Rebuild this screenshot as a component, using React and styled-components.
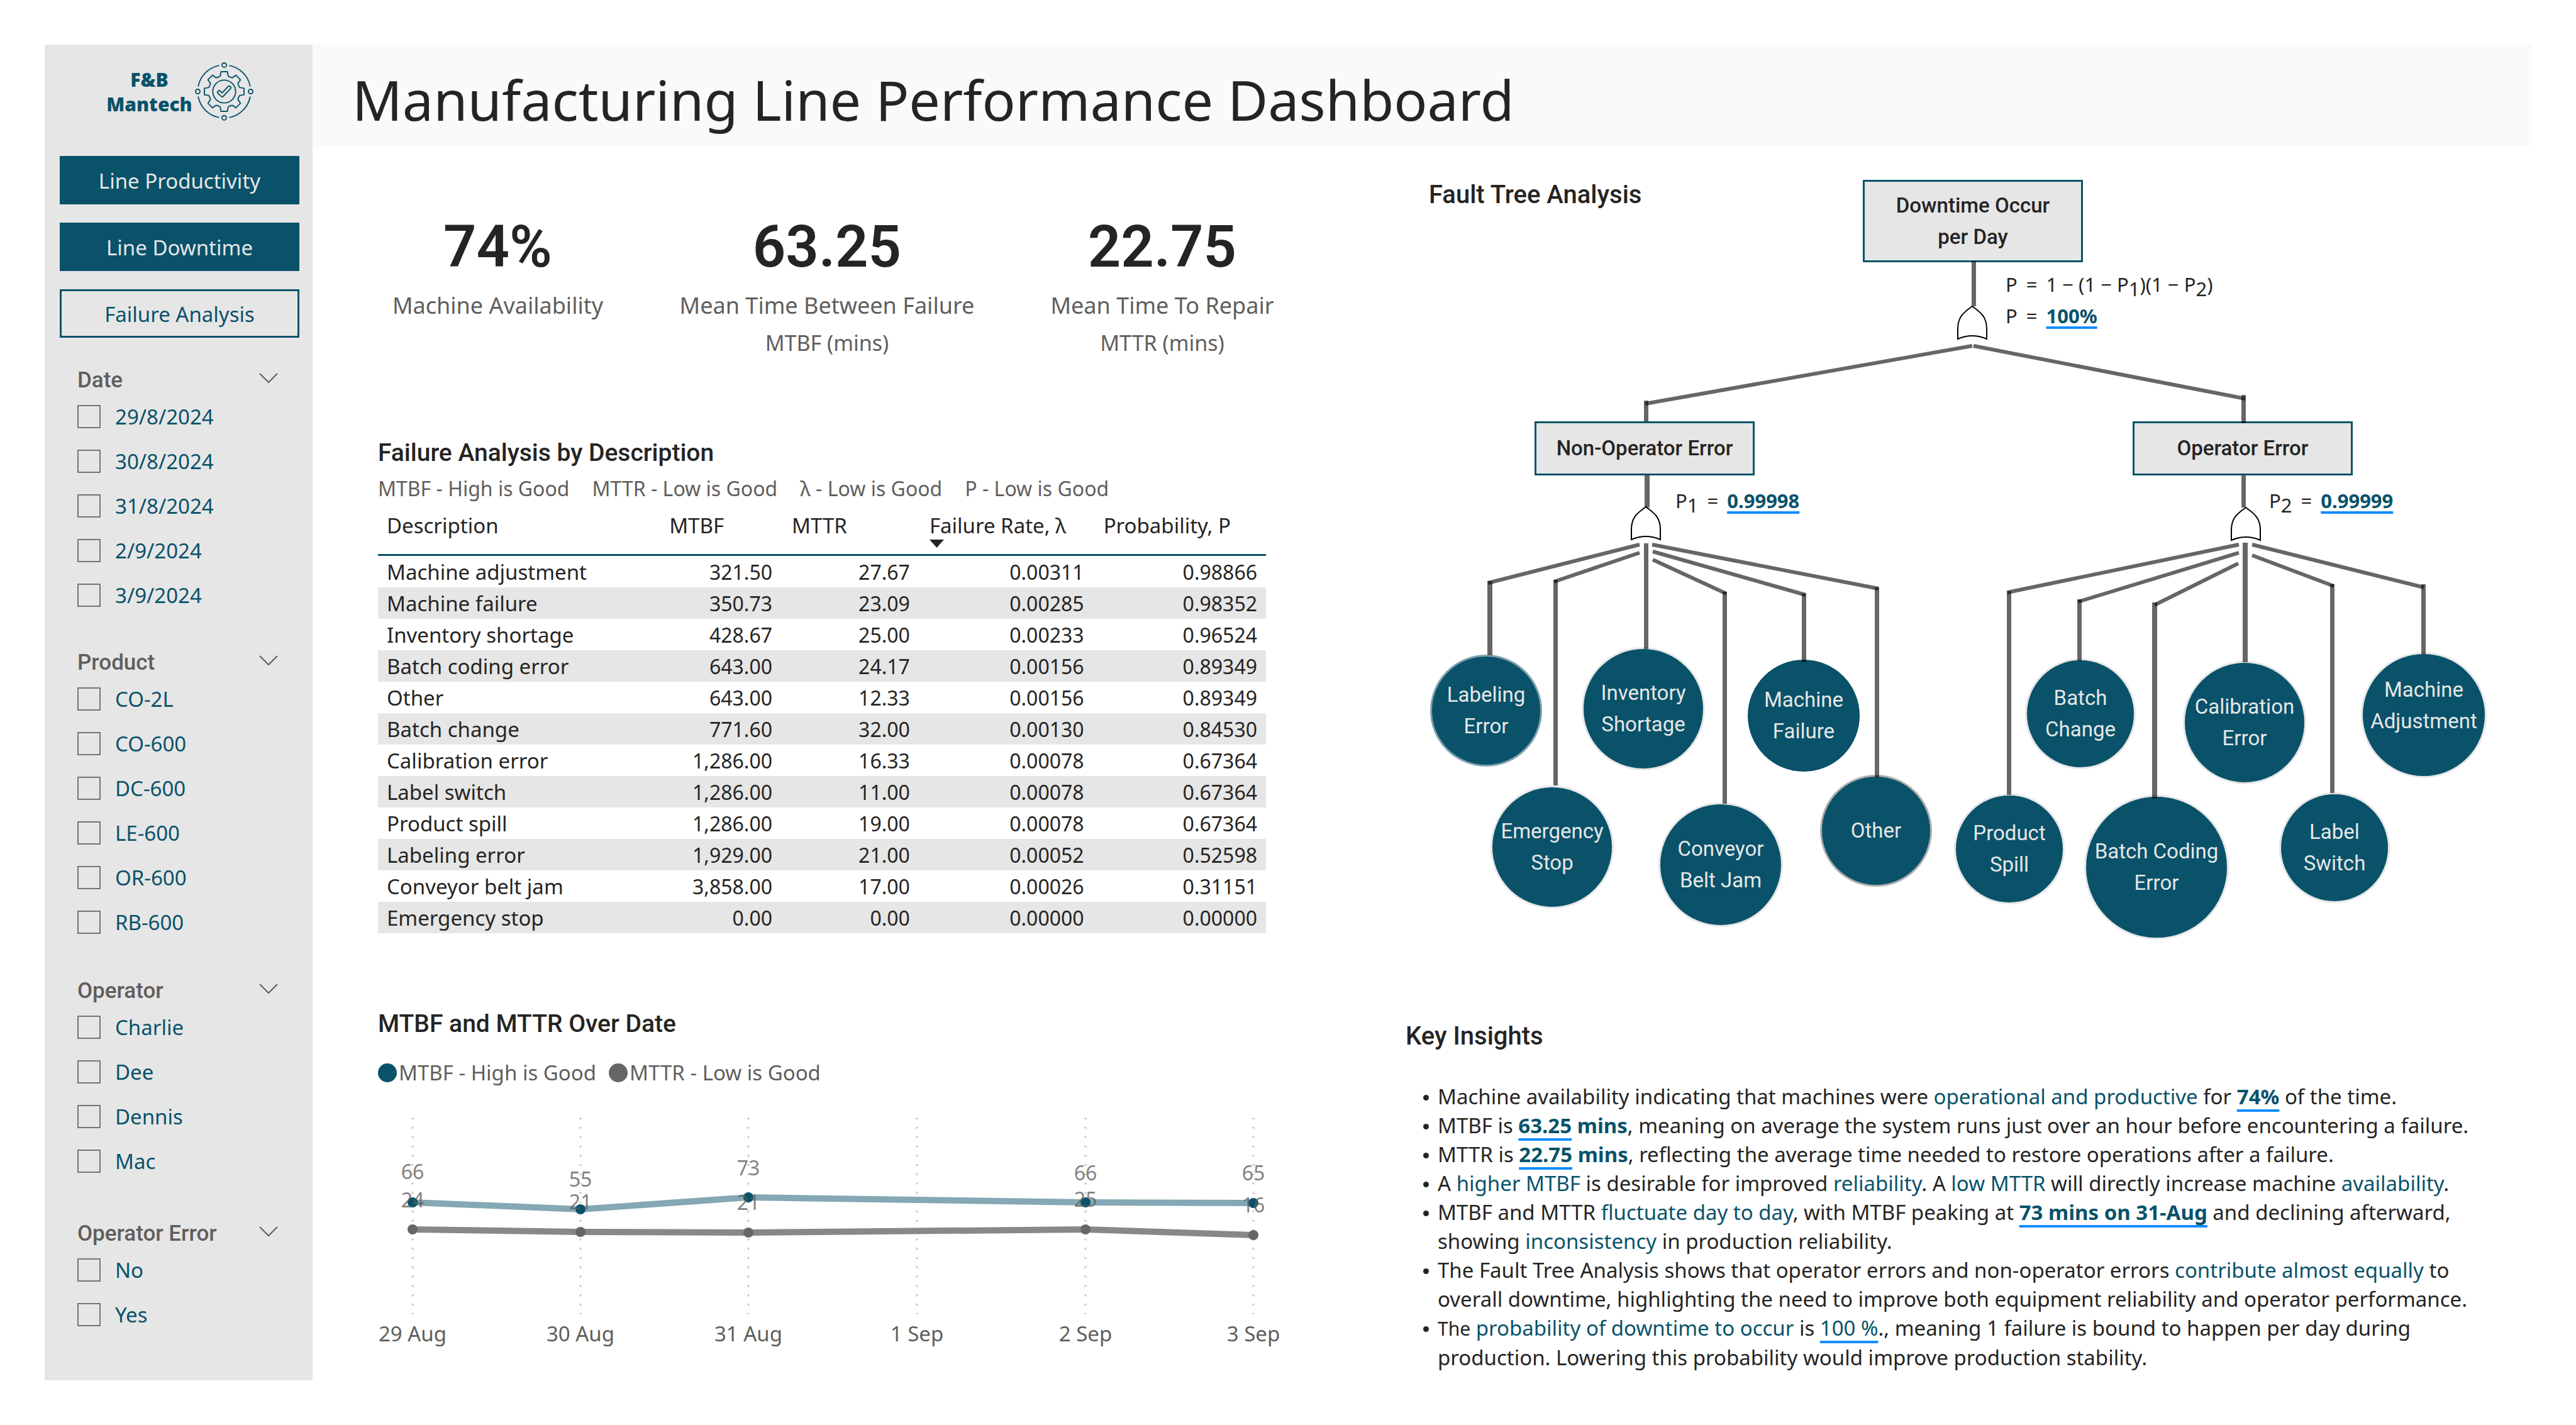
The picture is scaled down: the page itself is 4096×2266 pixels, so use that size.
import React from "react";
import styled, { createGlobalStyle } from "styled-components";

const teal = "#09526a";
const ink = "#252423";
const muted = "#605e5c";
const panel = "#e6e6e6";
const accent = "#118dff";
const textFont = '"Noto Sans", "Open Sans", sans-serif';
const dinFont = 'Roboto, "Noto Sans", sans-serif';

const GlobalStyle = createGlobalStyle`
  *, *::before, *::after { box-sizing: border-box; }
  body { margin: 0; background: #fff; color: ${ink}; font-family: ${textFont}; }
  h1, h2, h3, p, ul { margin: 0; padding: 0; }
`;

const Page = styled.div`
  min-height: 100vh;
  padding: 71px;
  display: grid;
  grid-template-columns: 426px minmax(0, 1fr);
`;

/* ---------- sidebar ---------- */

const Sidebar = styled.aside`
  background: ${panel};
  padding: 28px 0 40px;
`;

const Brand = styled.div`
  display: flex;
  align-items: center;
  justify-content: center;
  gap: 4px;
  margin-bottom: 56px;
  padding-left: 4px;
`;

const BrandName = styled.p`
  color: ${teal};
  font-size: 30px;
  font-weight: 900;
  line-height: 39px;
  text-align: center;
`;

const BrandMark = styled.svg`
  width: 93px;
  height: 93px;
  fill: none;
  stroke: ${teal};
  stroke-width: 6;
`;

const Nav = styled.nav`
  display: flex;
  flex-direction: column;
  gap: 29px;
  padding: 0 21px 0 24px;
  margin-bottom: 46px;
`;

const NavButton = styled.button`
  height: 77px;
  border: 3px solid ${teal};
  background: ${(p) => (p.$active ? panel : teal)};
  color: ${(p) => (p.$active ? teal : panel)};
  font-family: ${textFont};
  font-size: 33px;
  line-height: 46px;
  padding: 2px 0 0;
  cursor: pointer;
`;

const SlicerBox = styled.section`
  padding: 0 55px 0 52px;
  margin-bottom: ${(p) => p.$gap}px;
`;

const SlicerHead = styled.div`
  display: flex;
  align-items: center;
  justify-content: space-between;
  height: 44px;
`;

const SlicerTitle = styled.h3`
  color: ${muted};
  font-family: ${dinFont};
  font-size: 35px;
  font-weight: 500;
  line-height: 44px;
`;

const ChevronButton = styled.button`
  display: flex;
  border: 0;
  background: none;
  padding: 0 0 8px;
  cursor: pointer;
`;

const Option = styled.label`
  display: flex;
  align-items: center;
  gap: 23px;
  height: 71px;
  color: ${teal};
  font-size: 33px;
`;

const Tick = styled.input.attrs({ type: "checkbox" })`
  appearance: none;
  width: 37px;
  height: 37px;
  margin: 0;
  border: 2px solid #757575;
  &:checked { background: ${teal}; }
`;

/* ---------- main ---------- */

const Main = styled.main`
  display: flex;
  flex-direction: column;
`;

const TitleBar = styled.header`
  height: 161px;
  padding: 12px 63px 0;
  background: #fafafa;
  display: flex;
  align-items: center;
`;

const Title = styled.h1`
  font-size: 88px;
  font-weight: 400;
  line-height: 120px;
`;

const Body = styled.div`
  display: grid;
  grid-template-columns: minmax(0, 1589fr) minmax(0, 1906fr);
  padding-left: 33px;
`;

const Heading = styled.h2`
  font-family: ${dinFont};
  font-size: ${(p) => (p.$compact ? 39 : 40)}px;
  font-weight: 500;
  line-height: 52px;
`;

const Kpis = styled.section`
  display: grid;
  grid-template-columns: 523fr 524fr 542fr;
  padding-top: 116px;
  margin-bottom: 125px;
  text-align: center;
`;

const KpiValue = styled.p`
  font-family: ${dinFont};
  font-size: 92px;
  font-weight: 600;
  line-height: 90px;
  margin-bottom: 24px;
`;

const KpiLabel = styled.p`
  color: ${muted};
  font-size: 36px;
  line-height: 48px;
  margin-bottom: 11px;
`;

const KpiUnit = styled.p`
  color: ${muted};
  font-size: 34px;
  line-height: 48px;
`;

const TableSection = styled.section`
  padding: 0 106px 0 71px;
  margin-bottom: 118px;
`;

const Hints = styled.p`
  display: flex;
  gap: 36px;
  margin-top: 9px;
  color: ${muted};
  font-size: 32px;
  line-height: 44px;
`;

const Table = styled.table`
  width: 100%;
  table-layout: fixed;
  border-spacing: 0;
  font-size: 33px;
`;

const Col = styled.col`
  width: ${(p) => p.$share}%;
`;

const HeadCell = styled.th`
  height: 85px;
  padding: 15px 0 10px ${(p) => (p.$first ? 14 : 17)}px;
  border-bottom: 3px solid ${teal};
  font-weight: 400;
  line-height: 44px;
  text-align: left;
  vertical-align: top;
  white-space: nowrap;
`;

const SortMark = styled.svg`
  display: block;
  width: 23px;
  height: 13px;
  fill: ${ink};
`;

const BodyRow = styled.tr`
  &:nth-child(even) { background: ${panel}; }
`;

const Cell = styled.td`
  height: 50px;
  padding: 1px 14px 0;
  line-height: 46px;
  font-size: ${(p) => (p.$number ? 32 : 33)}px;
  text-align: ${(p) => (p.$number ? "right" : "left")};
`;

const ChartSection = styled.section`
  padding-left: 71px;
`;

const Legend = styled.div`
  display: flex;
  gap: 20px;
  margin-top: 30px;
  color: ${muted};
  font-size: 33px;
  line-height: 44px;
`;

const LegendItem = styled.span`
  display: flex;
  align-items: center;
  gap: 3px;
  &::before {
    content: "";
    width: 30px;
    height: 30px;
    border-radius: 50%;
    background: ${(p) => p.$color};
  }
`;

const Plot = styled.svg`
  display: block;
  width: 100%;
  font-family: ${textFont};
`;

const AxisText = styled.text`
  fill: ${muted};
  font-size: 33px;
  text-anchor: middle;
`;

const PointText = styled.text`
  fill: ${muted};
  fill-opacity: 0.8;
  font-size: 32px;
  text-anchor: middle;
`;

const Right = styled.div`
  padding-left: 116px;
`;

/* ---------- fault tree ---------- */

const Tree = styled.section`
  position: relative;
  height: 1390px;
  padding: 52px 0 0 37px;
`;

const Wires = styled.svg`
  position: absolute;
  left: 0;
  top: 0;
  width: 1790px;
  height: 1300px;
`;

const Node = styled.div`
  position: absolute;
  left: ${(p) => p.$x}px;
  top: ${(p) => p.$y}px;
  width: ${(p) => p.$w}px;
  height: ${(p) => p.$h}px;
  display: flex;
  align-items: center;
  justify-content: center;
  font-family: ${dinFont};
  font-size: 33px;
  font-weight: 400;
  line-height: 50px;
  text-align: center;
  white-space: pre-line;
`;

const EventBox = styled(Node)`
  border: 3px solid ${teal};
  background: ${panel};
  font-weight: 500;
`;

const Cause = styled(Node)`
  border: 3px solid ${(p) => p.$rim || panel};
  border-radius: 50%;
  background: ${teal};
  color: ${panel};
  padding-bottom: ${(p) => p.$rise || 0}px;
`;

const Formula = styled.div`
  position: absolute;
  left: ${(p) => p.$x}px;
  top: ${(p) => p.$y}px;
  font-size: 31px;
  line-height: 50px;
`;

const FormulaLine = styled.p`
  display: flex;
  gap: 14px;
`;

const Sub = styled.sub`
  font-size: 31px;
  line-height: 0;
  vertical-align: -7px;
`;

const Value = styled.b`
  align-self: flex-start;
  color: ${teal};
  font-size: 31px;
  font-weight: ${(p) => (p.$light ? 400 : 700)};
  text-decoration: underline ${accent};
  text-decoration-thickness: 4px;
  text-underline-offset: 5px;
  text-decoration-skip-ink: none;
`;

/* ---------- insights ---------- */

const Insights = styled.section``;

const List = styled.ul`
  list-style: none;
  margin-top: 47px;
  padding: 0 48px 0 51px;
  font-size: 33px;
  line-height: 46px;
`;

const Item = styled.li`
  position: relative;
  &::before {
    content: "";
    position: absolute;
    left: -23px;
    top: 20px;
    width: 9px;
    height: 9px;
    border-radius: 50%;
    background: ${ink};
  }
`;

const Hl = styled.span`
  color: ${teal};
`;

const Strong = styled.b`
  color: ${teal};
`;

const Key = styled(Value)`
  font-size: inherit;
  text-underline-offset: 8px;
`;

const Small = styled.span`
  font-size: 30px;
`;

const slicers = [
  { title: "Date", gap: 50, items: ["29/8/2024", "30/8/2024", "31/8/2024", "2/9/2024", "3/9/2024"] },
  { title: "Product", gap: 52, items: ["CO-2L", "CO-600", "DC-600", "LE-600", "OR-600", "RB-600"] },
  { title: "Operator", gap: 58, items: ["Charlie", "Dee", "Dennis", "Mac"] },
  { title: "Operator Error", gap: 0, items: ["No", "Yes"] },
];

const rows = [
  ["Machine adjustment", "321.50", "27.67", "0.00311", "0.98866"],
  ["Machine failure", "350.73", "23.09", "0.00285", "0.98352"],
  ["Inventory shortage", "428.67", "25.00", "0.00233", "0.96524"],
  ["Batch coding error", "643.00", "24.17", "0.00156", "0.89349"],
  ["Other", "643.00", "12.33", "0.00156", "0.89349"],
  ["Batch change", "771.60", "32.00", "0.00130", "0.84530"],
  ["Calibration error", "1,286.00", "16.33", "0.00078", "0.67364"],
  ["Label switch", "1,286.00", "11.00", "0.00078", "0.67364"],
  ["Product spill", "1,286.00", "19.00", "0.00078", "0.67364"],
  ["Labeling error", "1,929.00", "21.00", "0.00052", "0.52598"],
  ["Conveyor belt jam", "3,858.00", "17.00", "0.00026", "0.31151"],
  ["Emergency stop", "0.00", "0.00", "0.00000", "0.00000"],
];

const days = [
  [55, "29 Aug"],
  [322, "30 Aug"],
  [589, "31 Aug"],
  [857, "1 Sep"],
  [1125, "2 Sep"],
  [1392, "3 Sep"],
];

/* x, y, label, label baseline */
const mtbf = [
  [55, 184, "66", 147],
  [322, 195, "55", 159],
  [589, 176, "73", 141],
  [1125, 184, "66", 149],
  [1392, 185, "65", 149],
];
const mttr = [
  [55, 227, "24", 192],
  [322, 231, "21", 195],
  [589, 232, "21", 196],
  [1125, 227, "25", 191],
  [1392, 236, "16", 200],
];

/* slanted branches: x1, y1, x2, y2 */
const branches = [
  [901, 318, 381, 410],
  [903, 318, 1335, 402],
  [372, 634, 131, 695],
  [372, 647, 236, 693],
  [392, 634, 752, 704],
  [393, 645, 636, 714],
  [393, 658, 510, 712],
  [1325, 634, 957, 710],
  [1325, 647, 1069, 725],
  [1324, 664, 1191, 730],
  [1346, 634, 1619, 702],
  [1346, 651, 1476, 700],
];

/* vertical stems: x, y, width, end */
const stems = [
  [900, 183, 7, 255],
  [379, 405, 7, 438],
  [1329, 396, 7, 441],
  [380, 524, 8, 575],
  [1329, 524, 7, 575],
  [379, 632, 7, 800],
  [130, 692, 8, 810],
  [235, 690, 7, 1017],
  [746, 702, 7, 1004],
  [630, 712, 7, 821],
  [504, 709, 7, 1046],
  [1331, 631, 8, 821],
  [956, 708, 7, 1032],
  [1068, 721, 7, 819],
  [1187, 726, 8, 1038],
  [1615, 697, 7, 808],
  [1470, 697, 7, 1029],
];

/* centre x, centre y, radius, text, rim colour, rise */
const causes = [
  [128, 898, 89, "Labeling\nError", "#7fa1ae"],
  [233, 1115, 98, "Emergency\nStop"],
  [378, 895, 98, "Inventory\nShortage"],
  [501, 1143, 99, "Conveyor\nBelt Jam"],
  [633, 906, 89, "Machine\nFailure", teal],
  [748, 1089, 89, "Other", "#adadad"],
  [960, 1118, 88, "Product\nSpill"],
  [1073, 903, 88, "Batch\nChange"],
  [1194, 1147, 115, "Batch Coding\nError"],
  [1334, 917, 98, "Calibration\nError"],
  [1477, 1116, 88, "Label\nSwitch"],
  [1619, 905, 100, "Machine\nAdjustment", panel, 30],
];

const gearPoints = () => {
  const pts = [];
  for (let k = 0; k < 8; k++) {
    const a = (k * Math.PI) / 4;
    [[-29, -72], [-20, -77], [-16, -99], [16, -99], [20, -77], [29, -72]].forEach(([x, y]) => {
      pts.push(
        `${(146 + x * Math.cos(a) - y * Math.sin(a)).toFixed(1)},${(146 + x * Math.sin(a) + y * Math.cos(a)).toFixed(1)}`
      );
    });
  }
  return pts.join(" ");
};

function Gear() {
  return (
    <BrandMark viewBox="0 0 292 292" aria-hidden="true">
      <circle cx="146" cy="14" r="11" />
      <circle cx="146" cy="277" r="11" />
      <circle cx="14" cy="146" r="11" />
      <circle cx="278" cy="146" r="11" />
      <path d="M121 16 A132 132 0 0 0 16 121 M171 16 A132 132 0 0 1 276 121 M16 171 A132 132 0 0 0 121 276 M276 171 A132 132 0 0 1 171 276" />
      <polygon points={gearPoints()} strokeLinejoin="round" />
      <circle cx="146" cy="146" r="57" />
      <path d="M121 150 L136 164 L171 127" strokeWidth="22" strokeLinecap="round" strokeLinejoin="round" />
      <path d="M121 150 L136 164 L171 127" stroke={panel} strokeWidth="10" strokeLinecap="round" strokeLinejoin="round" />
    </BrandMark>
  );
}

function Slicer({ title, items, gap }) {
  return (
    <SlicerBox $gap={gap}>
      <SlicerHead>
        <SlicerTitle>{title}</SlicerTitle>
        <ChevronButton aria-label={title}>
          <svg width="30" height="18" viewBox="0 0 30 18" fill="none" stroke={muted} strokeWidth="2">
            <path d="M1 2 L15 16 L29 2" />
          </svg>
        </ChevronButton>
      </SlicerHead>
      {items.map((item) => (
        <Option key={item}>
          <Tick />
          {item}
        </Option>
      ))}
    </SlicerBox>
  );
}

function Kpi({ value, label, unit }) {
  return (
    <div>
      <KpiValue>{value}</KpiValue>
      <KpiLabel>{label}</KpiLabel>
      {unit && <KpiUnit>{unit}</KpiUnit>}
    </div>
  );
}

const toLine = (series) => series.map(([x, y]) => `${x},${y}`).join(" ");

function Chart() {
  return (
    <Plot viewBox="0 0 1518 424">
      {days.map(([x, label]) => (
        <g key={label}>
          <line x1={x} x2={x} y1="49" y2="362" stroke="#c8c8c8" strokeWidth="3" strokeDasharray="3 11.8" />
          <AxisText x={x} y="405">{label}</AxisText>
        </g>
      ))}
      <polyline points={toLine(mtbf)} fill="none" stroke="#84a8b4" strokeWidth="10" />
      <polyline points={toLine(mttr)} fill="none" stroke="#888888" strokeWidth="10" />
      {mtbf.map(([x, y]) => <circle key={x} cx={x} cy={y} r="8" fill={teal} />)}
      {mttr.map(([x, y]) => <circle key={x} cx={x} cy={y} r="8" fill="#666666" />)}
      {[...mtbf, ...mttr].map(([x, , label, base]) => (
        <PointText key={`${x}-${base}`} x={x} y={base}>{label}</PointText>
      ))}
    </Plot>
  );
}

function Gate({ x, y }) {
  return (
    <path
      transform={`translate(${x} ${y})`}
      d="M24 1 C10 11 1 18 1 37 V53 Q24 43 47 53 V37 C47 18 38 11 24 1 Z"
      fill="#fff"
      stroke="#000"
      strokeWidth="2"
    />
  );
}

function FaultTree() {
  return (
    <Tree>
      <Heading>Fault Tree Analysis</Heading>
      <EventBox $x={727} $y={54} $w={350} $h={131}>{"Downtime Occur\nper Day"}</EventBox>
      <EventBox $x={205} $y={438} $w={350} $h={86}>Non-Operator Error</EventBox>
      <EventBox $x={1156} $y={438} $w={350} $h={86}>Operator Error</EventBox>
      {causes.map(([cx, cy, r, text, rim, rise]) => (
        <Cause key={text} $x={cx - r} $y={cy - r} $w={2 * r} $h={2 * r} $rim={rim} $rise={rise}>
          {text}
        </Cause>
      ))}
      <Wires viewBox="0 0 1790 1300" aria-hidden="true">
        <g stroke="#000" strokeOpacity="0.6" strokeWidth="6">
          {branches.map(([x1, y1, x2, y2]) => (
            <line key={`${x1}-${x2}`} x1={x1} y1={y1} x2={x2} y2={y2} />
          ))}
        </g>
        <g fill="#000" fillOpacity="0.6">
          {stems.map(([x, y, w, end]) => (
            <rect key={`${x}-${y}`} x={x} y={y} width={w} height={end - y} />
          ))}
        </g>
        <Gate x={877} y={254} />
        <Gate x={358} y={573} />
        <Gate x={1312} y={574} />
      </Wires>
      <Formula $x={954} $y={195}>
        <FormulaLine>
          <span>P</span><span>=</span>
          <span>1 − (1 − P<Sub>1</Sub>)(1 − P<Sub>2</Sub>)</span>
        </FormulaLine>
        <FormulaLine>
          <span>P</span><span>=</span><Value>100%</Value>
        </FormulaLine>
      </Formula>
      <Formula $x={429} $y={539}>
        <FormulaLine>
          <span>P<Sub>1</Sub></span><span>=</span><Value>0.99998</Value>
        </FormulaLine>
      </Formula>
      <Formula $x={1373} $y={539}>
        <FormulaLine>
          <span>P<Sub>2</Sub></span><span>=</span><Value>0.99999</Value>
        </FormulaLine>
      </Formula>
    </Tree>
  );
}

export default function App() {
  return (
    <>
      <GlobalStyle />
      <Page>
        <Sidebar>
          <Brand>
            <BrandName>F&amp;B<br />Mantech</BrandName>
            <Gear />
          </Brand>
          <Nav>
            <NavButton>Line Productivity</NavButton>
            <NavButton>Line Downtime</NavButton>
            <NavButton $active>Failure Analysis</NavButton>
          </Nav>
          {slicers.map((s) => <Slicer key={s.title} {...s} />)}
        </Sidebar>
        <Main>
          <TitleBar>
            <Title>Manufacturing Line Performance Dashboard</Title>
          </TitleBar>
          <Body>
            <div>
              <Kpis>
                <Kpi value="74%" label="Machine Availability" />
                <Kpi value="63.25" label="Mean Time Between Failure" unit="MTBF (mins)" />
                <Kpi value="22.75" label="Mean Time To Repair" unit="MTTR (mins)" />
              </Kpis>
              <TableSection>
                <Heading $compact>Failure Analysis by Description</Heading>
                <Hints>
                  <span>MTBF - High is Good</span>
                  <span>MTTR - Low is Good</span>
                  <span>λ - Low is Good</span>
                  <span>P - Low is Good</span>
                </Hints>
                <Table>
                  <colgroup>
                    <Col $share={31.6} /><Col $share={13.8} /><Col $share={15.5} /><Col $share={19.6} /><Col $share={19.5} />
                  </colgroup>
                  <thead>
                    <tr>
                      <HeadCell $first>Description</HeadCell>
                      <HeadCell>MTBF</HeadCell>
                      <HeadCell>MTTR</HeadCell>
                      <HeadCell aria-sort="descending">
                        Failure Rate, λ
                        <SortMark viewBox="0 0 23 13"><path d="M0 0 H23 L11.5 13 Z" /></SortMark>
                      </HeadCell>
                      <HeadCell>Probability, P</HeadCell>
                    </tr>
                  </thead>
                  <tbody>
                    {rows.map(([name, ...values]) => (
                      <BodyRow key={name}>
                        <Cell>{name}</Cell>
                        {values.map((v, i) => <Cell key={i} $number>{v}</Cell>)}
                      </BodyRow>
                    ))}
                  </tbody>
                </Table>
              </TableSection>
              <ChartSection>
                <Heading $compact>MTBF and MTTR Over Date</Heading>
                <Legend>
                  <LegendItem $color={teal}>MTBF - High is Good</LegendItem>
                  <LegendItem $color="#666666">MTTR - Low is Good</LegendItem>
                </Legend>
                <Chart />
              </ChartSection>
            </div>
            <Right>
              <FaultTree />
              <Insights>
                <Heading>Key Insights</Heading>
                <List>
                  <Item>Machine availability indicating that machines were <Hl>operational and productive</Hl> for <Key>74%</Key> of the time.</Item>
                  <Item>MTBF is <Key>63.25</Key><Strong> mins</Strong>, meaning on average the system runs just over an hour before encountering a failure.</Item>
                  <Item>MTTR is <Key>22.75</Key><Strong> mins</Strong>, reflecting the average time needed to restore operations after a failure.</Item>
                  <Item>A <Hl>higher MTBF</Hl> is desirable for improved <Hl>reliability</Hl>. A <Hl>low MTTR</Hl> will directly increase machine <Hl>availability</Hl>.</Item>
                  <Item>MTBF and MTTR <Hl>fluctuate day to day</Hl>, with MTBF peaking at <Key>73 mins on 31-Aug</Key> and declining afterward, showing <Hl>inconsistency</Hl> in production reliability.</Item>
                  <Item>The Fault Tree Analysis shows that operator errors and non-operator errors <Hl>contribute almost equally</Hl> to overall downtime, highlighting the need to improve both equipment reliability and operator performance.</Item>
                  <Item><Small>The</Small> <Hl>probability of downtime to occur</Hl> is <Key $light>100 %</Key>., meaning 1 failure is bound to happen per day during production. Lowering this probability would improve production stability.</Item>
                </List>
              </Insights>
            </Right>
          </Body>
        </Main>
      </Page>
    </>
  );
}
